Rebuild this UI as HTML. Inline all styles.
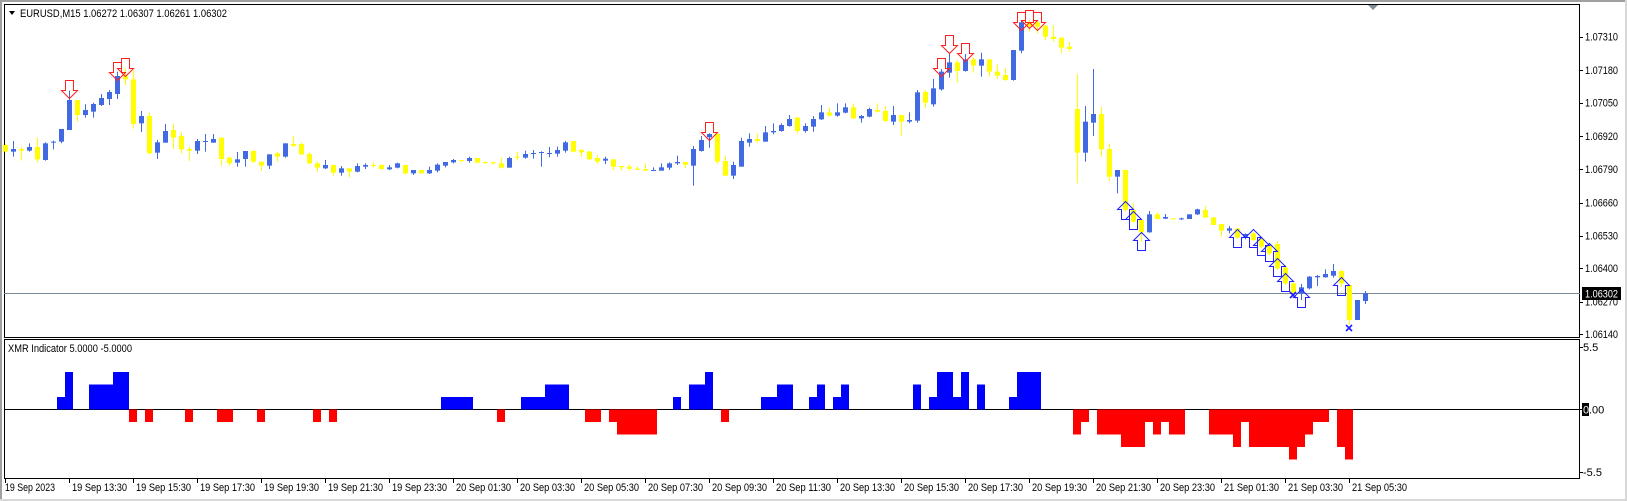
<!DOCTYPE html>
<html><head><meta charset="utf-8"><style>
html,body{margin:0;padding:0;background:#fff;}
body{width:1627px;height:501px;overflow:hidden;position:relative;font-family:"Liberation Sans",sans-serif;font-size:11px;color:#000;}
svg{position:absolute;left:0;top:0;}
</style></head><body>
<svg id="s" width="1627" height="501" xmlns="http://www.w3.org/2000/svg" font-family="Liberation Sans, sans-serif" font-size="11">
<rect x="0" y="0" width="1627" height="501" fill="#fff"/>
<rect x="0" y="0" width="1627" height="2" fill="#a0a0a0"/>
<rect x="0" y="0" width="2" height="501" fill="#a0a0a0"/>
<rect x="0" y="499" width="1627" height="2" fill="#d8d8d8"/>
<rect x="1625" y="0" width="2" height="501" fill="#d8d8d8"/>
<rect x="4.5" y="4.5" width="1575" height="333" fill="none" stroke="#000"/>
<rect x="4.5" y="339.5" width="1575" height="139" fill="none" stroke="#000"/>
<line x1="4" y1="293.5" x2="1580" y2="293.5" stroke="#778899"/>
<line x1="4" y1="409.5" x2="1582" y2="409.5" stroke="#000"/>
<polygon points="1368,5 1378,5 1373,10" fill="#7f8c99"/>
<polygon points="9,11 15,11 12,15" fill="#000"/>
<text x="20" y="17" textLength="207" lengthAdjust="spacingAndGlyphs">EURUSD,M15  1.06272 1.06307 1.06261 1.06302</text>
<text x="8" y="352" textLength="124" lengthAdjust="spacingAndGlyphs">XMR Indicator 5.0000 -5.0000</text>
<g id="g"></g>
<g font-size="11">
<text x="1585" y="40.5" textLength="33" lengthAdjust="spacingAndGlyphs">1.07310</text>
<text x="1585" y="74" textLength="33" lengthAdjust="spacingAndGlyphs">1.07180</text>
<text x="1585" y="106.5" textLength="33" lengthAdjust="spacingAndGlyphs">1.07050</text>
<text x="1585" y="140" textLength="33" lengthAdjust="spacingAndGlyphs">1.06920</text>
<text x="1585" y="173" textLength="33" lengthAdjust="spacingAndGlyphs">1.06790</text>
<text x="1585" y="206.5" textLength="33" lengthAdjust="spacingAndGlyphs">1.06660</text>
<text x="1585" y="239.5" textLength="33" lengthAdjust="spacingAndGlyphs">1.06530</text>
<text x="1585" y="272" textLength="33" lengthAdjust="spacingAndGlyphs">1.06400</text>
<text x="1585" y="305.5" textLength="33" lengthAdjust="spacingAndGlyphs">1.06270</text>
<text x="1585" y="338" textLength="33" lengthAdjust="spacingAndGlyphs">1.06140</text>
<rect x="1582" y="287" width="39" height="13" fill="#000"/>
<text x="1585" y="297.5" fill="#fff" textLength="33" lengthAdjust="spacingAndGlyphs">1.06302</text>
<text x="1583" y="351">5.5</text>
<rect x="1582" y="403" width="7" height="13" fill="#000"/>
<text x="1583" y="413.5" fill="#fff">0</text>
<text x="1589" y="413.5">.00</text>
<text x="1583" y="476">-5.5</text>
</g>
<g id="t" font-size="11"></g>
</svg>
<script>
var C=[
['y',435,455,430,458],['b',447,455,423,470],['y',447,452,440,482],['b',441,452,430,455],['y',441,478,413,488],['b',430,480,427,482],['b',425,428,422,448],['b',387,425,387,430],['b',300,390,272,390],['y',300,345,300,365],
['b',330,345,313,353],['b',312,335,308,353],['b',294,315,282,318],['b',276,297,270,315],['b',228,282,215,297],['y',228,238,205,255],['y',238,372,210,386],['b',348,370,333,396],['y',348,460,338,462],['b',427,458,420,477],
['b',393,428,372,428],['y',390,413,372,447],['y',408,448,397,460],['y',447,452,440,483],['b',423,452,417,462],['b',423,425,402,455],['b',417,428,402,428],['y',413,477,413,497],['y',473,490,470,497],['b',478,488,456,500],
['b',453,477,453,500],['y',453,485,450,490],['y',485,497,485,513],['b',463,497,463,507],['y',460,470,455,485],['b',430,470,430,473],['y',432,438,408,440],['y',432,463,428,465],['y',462,490,457,492],['y',490,503,485,515],
['b',495,505,480,507],['y',495,518,495,527],['b',505,518,498,527],['y',505,515,505,532],['b',498,515,490,517],['b',495,500,490,507],['y',495,497,488,502],['y',495,507,493,510],['b',502,508,495,510],['b',490,503,488,505],
['y',495,520,495,523],['b',510,520,510,525],['y',510,520,510,520],['b',510,520,500,522],['b',494,512,490,517],['b',486,497,486,502],['b',480,487,477,490],['y',480,482,480,488],['b',474,483,470,488],['y',474,488,474,490],
['y',486,488,484,492],['y',487,489,485,494],['y',490,503,472,506],['b',474,503,470,503],['y',470,472,456,482],['b',462,473,452,476],['b',459,461,450,476],['b',456,458,454,500],['b',459,461,441,472],['b',450,461,440,470],
['b',427,452,423,458],['y',423,455,423,457],['y',450,457,447,470],['y',455,478,453,480],['y',474,485,465,492],['b',476,482,470,492],['y',478,500,478,510],['y',498,502,498,512],['y',500,506,493,512],['y',506,508,500,510],
['y',507,512,490,512],['b',510,512,502,512],['b',502,512,490,512],['b',490,503,487,510],['b',486,490,467,495],['y',486,494,486,505],['b',447,497,438,557],['b',420,453,408,455],['b',402,412,400,443],['y',402,485,400,492],
['y',483,527,468,527],['b',495,527,485,537],['b',423,500,413,500],['b',417,428,400,440],['y',417,423,400,428],['b',397,425,378,425],['b',393,397,370,403],['b',375,393,370,395],['b',357,378,345,380],['y',353,393,350,400],
['b',378,393,370,398],['b',357,380,348,395],['b',337,358,315,360],['y',337,347,323,350],['b',337,347,310,350],['b',322,338,310,340],['y',322,355,310,357],['b',348,355,345,368],['b',327,350,323,352],['y',330,335,310,338],
['y',333,363,318,367],['b',345,365,318,375],['y',345,365,345,407],['b',360,365,337,370],['b',277,362,270,368],['y',276,308,270,323],['b',265,313,237,320],['b',215,268,207,272],['b',187,218,160,233],['y',187,213,180,248],
['b',178,213,162,215],['y',178,197,172,218],['b',178,197,158,230],['y',178,215,178,230],['y',215,227,192,237],['y',225,240,205,243],['b',150,240,150,242],['b',67,152,62,160],['y',67,78,60,95],['y',67,80,63,100],
['y',78,110,75,120],['y',110,117,75,125],['y',113,143,113,160],['y',140,147,125,155],['y',327,458,222,550],['b',365,458,318,485],['b',342,368,207,408],['y',342,448,320,470],['y',447,530,430,543],['b',510,530,510,580],
['y',510,630,510,635],['y',630,665,610,668],['y',660,697,660,725],['b',643,697,633,698],['y',643,657,637,658],['b',651,656,642,657],['y',655,657,655,657],['b',655,657,653,660],['b',643,657,643,657],['b',628,643,626,645],
['y',630,653,618,653],['y',652,675,652,675],['y',672,692,672,710],['b',685,692,678,700],['y',685,713,685,715],['b',702,710,700,718],['y',700,720,695,722],['y',717,740,715,745],['y',735,760,730,765],['y',732,805,725,810],
['y',803,850,795,855],['y',850,878,848,882],['b',862,880,852,900],['b',830,865,828,868],['b',828,832,825,858],['b',822,832,808,833],['b',813,827,792,833],['y',813,850,808,860],['y',855,960,855,975],['b',900,960,900,960],
['b',880,903,873,912]];
var H={7:1,8:3,11:2,12:2,13:2,14:3,15:3,16:-1,18:-1,23:-1,27:-1,28:-1,32:-1,39:-1,41:-1,
55:1,56:1,57:1,58:1,62:-1,65:1,66:1,67:1,68:2,69:2,70:2,73:-1,74:-1,76:-1,77:-2,78:-2,79:-2,80:-2,81:-2,84:1,86:2,87:2,88:3,90:-1,95:1,96:1,97:2,98:2,
101:1,102:2,104:1,105:2,114:2,116:1,117:3,118:3,119:1,120:3,122:2,126:1,127:3,128:3,129:3,134:-2,135:-1,137:-2,138:-2,139:-2,140:-3,141:-3,142:-3,143:-1,144:-2,145:-1,146:-2,147:-2,
151:-2,152:-2,153:-2,154:-3,155:-1,156:-3,157:-3,158:-3,159:-3,160:-3,161:-4,162:-3,163:-2,164:-1,165:-1,167:-3,168:-4};
var D={8:80,14:62,15:58,88:122,117:58,118:35,120:43,127:12,128:10,129:12};
var U={140:201,141:211,142:232,154:229,156:229,157:237,158:243,159:258,160:273,162:289,167:277};
var s='';
for(var k in H){var c=5+8*k,v=H[k];var y=v>0?409.5-12.5*v:409.5;s+='<rect x="'+(c-4)+'" y="'+y+'" width="8" height="'+(12.5*Math.abs(v))+'" fill="'+(v>0?'#0000ff':'#ff0000')+'"/>';}
for(var i=0;i<C.length;i++){var d=C[i],c=5+8*i,col=d[0]=='b'?'#4169e1':'#ffff00';
var wt=d[3]/3,wb=d[4]/3,bt=d[1]/3,bb=d[2]/3;if(bb-bt<1)bb=bt+1;
s+='<rect x="'+c+'" y="'+wt+'" width="1" height="'+Math.max(1,wb-wt)+'" fill="'+col+'"/>';
s+='<rect x="'+(c-2)+'" y="'+bt+'" width="5" height="'+(bb-bt)+'" fill="'+col+'"/>';}
for(var k in D){var c=5+8*k+0.5,t=D[k]+0.5;s+='<polygon points="'+(c-4)+','+t+' '+(c+4)+','+t+' '+(c+4)+','+(t+10)+' '+(c+8)+','+(t+10)+' '+c+','+(t+18)+' '+(c-8)+','+(t+10)+' '+(c-4)+','+(t+10)+'" fill="none" stroke="#ff2020" stroke-width="1"/>';}
for(var k in U){var c=5+8*k+0.5,t=U[k]+0.5;s+='<polygon points="'+c+','+t+' '+(c+8)+','+(t+8)+' '+(c+4)+','+(t+8)+' '+(c+4)+','+(t+18)+' '+(c-4)+','+(t+18)+' '+(c-4)+','+(t+8)+' '+(c-8)+','+(t+8)+'" fill="none" stroke="#2020ff" stroke-width="1"/>';}
[[1293,295],[1349,328]].forEach(function(p){s+='<path d="M'+(p[0]-3)+' '+(p[1]-3)+'L'+(p[0]+3)+' '+(p[1]+3)+'M'+(p[0]+3)+' '+(p[1]-3)+'L'+(p[0]-3)+' '+(p[1]+3)+'" stroke="#2020ff" stroke-width="1.6"/>';});
document.getElementById('g').innerHTML=s;
var L=['19 Sep 13:30','19 Sep 15:30','19 Sep 17:30','19 Sep 19:30','19 Sep 21:30','19 Sep 23:30','20 Sep 01:30','20 Sep 03:30','20 Sep 05:30','20 Sep 07:30','20 Sep 09:30','20 Sep 11:30','20 Sep 13:30','20 Sep 15:30','20 Sep 17:30','20 Sep 19:30','20 Sep 21:30','20 Sep 23:30','21 Sep 01:30','21 Sep 03:30','21 Sep 05:30'];
var t='<rect x="5" y="479" width="1" height="4" fill="#000"/><text x="5" y="491" textLength="50" lengthAdjust="spacingAndGlyphs">19 Sep 2023</text>';
for(var i=0;i<L.length;i++){var x=69+64*i;t+='<rect x="'+x+'" y="479" width="1" height="4" fill="#000"/><text x="'+(x+3)+'" y="491" textLength="55" lengthAdjust="spacingAndGlyphs">'+L[i]+'</text>';}
[36.7,70,102.7,136,169,202.7,235.7,268.3,301.7,334.3,347,472].forEach(function(y){t+='<rect x="1580" y="'+Math.round(y)+'" width="3" height="1" fill="#000"/>';});
document.getElementById('t').innerHTML=t;
</script>
</body></html>
